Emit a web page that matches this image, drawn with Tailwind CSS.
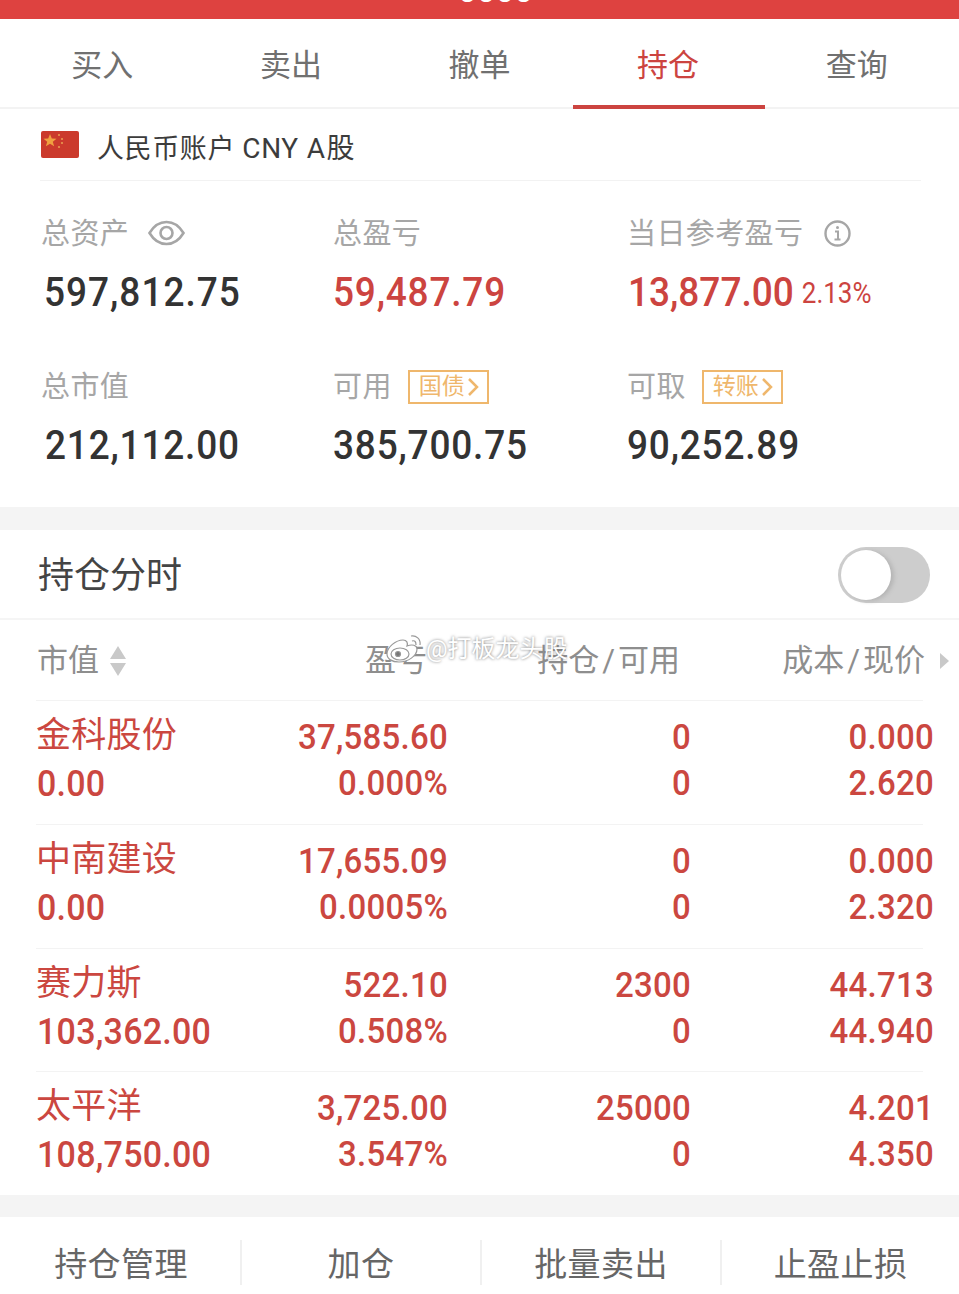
<!DOCTYPE html>
<html lang="en">
  <head>
    <meta charset="UTF-8" />
    <script src="https://cdn.jsdelivr.net/npm/@tailwindcss/browser@4"></script>
    <meta name="viewport" content="width=device-width, initial-scale=1.0" />
    <title>持仓</title>
  </head>

  <body class="bg-white font-['Roboto','Noto_Sans_CJK_SC',sans-serif]">
    <div class="relative w-[959px] h-[1294px] overflow-hidden bg-white">
      <!-- Top Bar -->
      <div class="h-[19px] bg-[#de4240] overflow-hidden flex justify-center">
        <span class="ml-[32px] text-white text-[33px] leading-[33px] -mt-[26px] font-medium">0000</span>
      </div>

      <!-- Tabs -->
      <nav class="flex h-[90px] px-2 border-b-2 border-[#f3f3f3] text-[31px] text-[#707070]">
        <a class="flex-1 flex items-center justify-center pt-[6px]">买入</a>
        <a class="flex-1 flex items-center justify-center pt-[6px]">卖出</a>
        <a class="flex-1 flex items-center justify-center pt-[6px]">撤单</a>
        <a class="relative flex-1 flex items-center justify-center pt-[6px] text-[#cc4440]">
          持仓
          <span class="absolute left-[-1px] right-[-3px] bottom-[-2px] h-[4px] bg-[#cc4440]"></span>
        </a>
        <a class="flex-1 flex items-center justify-center pt-[6px]">查询</a>
      </nav>

      <!-- Account -->
      <div class="ml-10 mr-[38px] h-[72px] border-b border-[#f2f2f2] flex items-center gap-[18px] text-[27px] text-[#3c3c3c]">
        <svg class="w-[38px] h-[27px] ml-px" viewBox="0 0 38 27">
          <rect width="38" height="27" rx="2" fill="#cb3a2c" />
          <polygon points="9,3 10.800,7.600 15.500,7.800 11.800,10.800 13.100,15.300 9,12.700 4.900,15.300 6.200,10.800 2.500,7.800 7.200,7.600" fill="#f0a040" />
          <circle cx="18" cy="4" r="1.100" fill="#e89a50" />
          <circle cx="21" cy="8" r="1.100" fill="#e89a50" />
          <circle cx="21" cy="12" r="1.100" fill="#e89a50" />
          <circle cx="18" cy="16" r="1.100" fill="#e89a50" />
        </svg>
        <span class="pt-[9px] tracking-[0.6px]">人民币账户 <span class="text-[28px]">CNY</span><span class="ml-[8px] text-[28px] tracking-[1.5px]">A股</span></span>
      </div>

      <!-- Assets -->
      <div class="grid grid-cols-[292px_294px_1fr] pl-[41px] h-[326px] pt-[32px] content-start">
        <div class="h-[153px]">
          <div class="flex items-center gap-[19px] h-[40px] text-[29px] tracking-[0.4px] text-[#a6a6a6]">
            <span class="pt-[4px]">总资产</span>
            <svg class="w-[37px] h-[26px]" viewBox="0 0 37 26" fill="none" stroke="#a6a6a6" stroke-width="2.600">
              <path d="M1.500 13C6 5.500 12 2 18.500 2S31 5.500 35.500 13C31 20.500 25 24 18.500 24S6 20.500 1.500 13Z" />
              <circle cx="18.500" cy="13" r="6" />
            </svg>
          </div>
          <div class="mt-[18px] ml-[3px] text-[37px] leading-[44px] font-medium tracking-[1px] scale-y-[1.1] text-[#333]">597,812.75</div>
        </div>
        <div class="h-[153px]">
          <div class="h-[40px] text-[29px] tracking-[0.4px] text-[#a6a6a6] flex items-center"><span class="pt-[4px]">总盈亏</span></div>
          <div class="mt-[18px] text-[37px] leading-[44px] font-medium tracking-[0.8px] scale-y-[1.1] text-[#cc4440]">59,487.79</div>
        </div>
        <div class="h-[153px]">
          <div class="h-[40px] text-[29px] tracking-[0.4px] text-[#a6a6a6] flex items-center gap-[21px]">
            <span class="pt-[4px]">当日参考盈亏</span>
            <svg class="w-[27px] h-[27px]" viewBox="0 0 27 27" fill="none" stroke="#a6a6a6">
              <circle cx="13.500" cy="13.500" r="12" stroke-width="2.400" />
              <path d="M11 11.500h3v8M10.500 19.500h6" stroke-width="2" />
              <circle cx="13.500" cy="7.500" r="1.500" fill="#a6a6a6" stroke="none" />
            </svg>
          </div>
          <div class="mt-[18px] flex items-center gap-[8px] text-[#cc4440]">
            <span class="ml-px text-[37px] leading-[44px] font-medium scale-y-[1.1]">13,877.00</span>
            <span class="text-[26px] scale-y-[1.1]">2.13%</span>
          </div>
        </div>
        <div>
          <div class="h-[40px] text-[29px] tracking-[0.4px] text-[#a6a6a6] flex items-center"><span class="pt-[4px]">总市值</span></div>
          <div class="mt-[18px] ml-[4px] text-[37px] leading-[44px] font-medium tracking-[0.8px] scale-y-[1.1] text-[#333]">212,112.00</div>
        </div>
        <div>
          <div class="h-[40px] text-[29px] tracking-[0.4px] text-[#a6a6a6] flex items-center gap-[16px]">
            <span class="pt-[4px]">可用</span>
            <span class="flex items-center gap-[2px] pl-[9px] w-[81px] h-[34px] mt-px border-2 border-[#efb76c] text-[23px] tracking-normal text-[#efb76c]">
              <span class="pt-[2px]">国债</span>
              <svg class="w-[12px] h-[20px]" viewBox="0 0 12 20" fill="none" stroke="#efb76c" stroke-width="2.500"><path d="M2 2l8 8-8 8" /></svg>
            </span>
          </div>
          <div class="mt-[18px] text-[37px] leading-[44px] font-medium tracking-[0.8px] scale-y-[1.1] text-[#333]">385,700.75</div>
        </div>
        <div>
          <div class="h-[40px] text-[29px] tracking-[0.4px] text-[#a6a6a6] flex items-center gap-[16px]">
            <span class="pt-[4px]">可取</span>
            <span class="flex items-center gap-[2px] pl-[9px] w-[81px] h-[34px] mt-px border-2 border-[#efb76c] text-[23px] tracking-normal text-[#efb76c]">
              <span class="pt-[2px]">转账</span>
              <svg class="w-[12px] h-[20px]" viewBox="0 0 12 20" fill="none" stroke="#efb76c" stroke-width="2.500"><path d="M2 2l8 8-8 8" /></svg>
            </span>
          </div>
          <div class="mt-[18px] text-[37px] leading-[44px] font-medium tracking-[0.8px] scale-y-[1.1] text-[#333]">90,252.89</div>
        </div>
      </div>

      <div class="h-[23px] bg-[#f4f4f4]"></div>

      <!-- Chart toggle -->
      <div class="h-[90px] border-b-2 border-[#f5f5f5] flex items-center justify-between pl-[38px] pr-[29px] text-[36px] text-[#444]">
        <span class="pt-[4px]">持仓分时</span>
        <div class="w-[92px] h-[56px] mt-px rounded-full bg-[#cdcdcd] p-[3px]">
          <div class="w-[50px] h-[50px] rounded-full bg-white shadow-[3px_1px_4px_#b4b4b4]"></div>
        </div>
      </div>

      <!-- Table Header -->
      <div class="relative h-[80px] grid grid-cols-[165px_225px_253px_1fr] items-center pt-[2px] pl-[37px] pr-[10px] text-[31px] text-[#8e8e8e]">
        <div class="flex items-center gap-[11px]">
          <span>市值</span>
          <svg class="w-[16px] h-[30px]" viewBox="0 0 16 30" fill="#c9c9c9"><path d="M8 0l8 13H0zM8 30L0 17h16z" /></svg>
        </div>
        <div class="text-right">盈亏</div>
        <div class="text-right">持仓<span class="mx-[3px]">/</span>可用</div>
        <div class="flex items-center justify-end gap-[15px]">
          <span>成本<span class="mx-[3px]">/</span>现价</span>
          <svg class="w-[9px] h-[16px]" viewBox="0 0 9 16" fill="#c9c9c9"><path d="M0 0l9 8-9 8z" /></svg>
        </div>

        <!-- Watermark -->
        <div class="absolute left-[384px] top-[11px] flex items-center">
          <svg class="w-[42px] h-[34px]" viewBox="0 0 42 34" fill="#fff" stroke="#999" stroke-width="1.200">
            <path d="M3 22c0-7 9-14 16-14 4 0 5 3 4 6 5-2 10-1 10 3 0 7-9 13-18 13C8 30 3 27 3 22Z" />
            <ellipse cx="16" cy="22" rx="9" ry="6" />
            <circle cx="14" cy="22" r="2.500" fill="#777" />
            <path d="M27 4c5-1 10 3 9 9M28 9c3-1 4 1 4 4" fill="none" />
          </svg>
          <span class="text-[24px] text-white [text-shadow:0_0_3px_#777]">@打板龙头股</span>
        </div>
      </div>

      <!-- Rows -->
      <div class="mx-[36px] border-t border-[#f3f3f3]">
        <div class="h-[124px] border-b border-[#f3f3f3] pt-[12px]">
          <div class="w-[898px] grid grid-cols-[191px_221px_243px_243px] text-[33px] text-[#cb4740] font-medium leading-[42px] text-right tracking-[0.25px]">
            <div class="text-left"><div class="text-[35px] leading-[45px] font-normal">金科股份</div><div class="mt-[4px] ml-px text-[34px] scale-y-[1.08] origin-left">0.00</div></div>
            <div class="pt-[5px] scale-y-[1.08]"><div>37,585.60</div><div>0.000%</div></div>
            <div class="pt-[5px] scale-y-[1.08]"><div>0</div><div>0</div></div>
            <div class="pt-[5px] scale-y-[1.08]"><div>0.000</div><div>2.620</div></div>
          </div>
        </div>
        <div class="h-[124px] border-b border-[#f3f3f3] pt-[12px]">
          <div class="w-[898px] grid grid-cols-[191px_221px_243px_243px] text-[33px] text-[#cb4740] font-medium leading-[42px] text-right tracking-[0.25px]">
            <div class="text-left"><div class="text-[35px] leading-[45px] font-normal">中南建设</div><div class="mt-[4px] ml-px text-[34px] scale-y-[1.08] origin-left">0.00</div></div>
            <div class="pt-[5px] scale-y-[1.08]"><div>17,655.09</div><div>0.0005%</div></div>
            <div class="pt-[5px] scale-y-[1.08]"><div>0</div><div>0</div></div>
            <div class="pt-[5px] scale-y-[1.08]"><div>0.000</div><div>2.320</div></div>
          </div>
        </div>
        <div class="h-[123px] border-b border-[#f3f3f3] pt-[12px]">
          <div class="w-[898px] grid grid-cols-[191px_221px_243px_243px] text-[33px] text-[#cb4740] font-medium leading-[42px] text-right tracking-[0.25px]">
            <div class="text-left"><div class="text-[35px] leading-[45px] font-normal">赛力斯</div><div class="mt-[4px] ml-px text-[34px] scale-y-[1.08] origin-left">103,362.00</div></div>
            <div class="pt-[5px] scale-y-[1.08]"><div>522.10</div><div>0.508%</div></div>
            <div class="pt-[5px] scale-y-[1.08]"><div>2300</div><div>0</div></div>
            <div class="pt-[5px] scale-y-[1.08]"><div>44.713</div><div>44.940</div></div>
          </div>
        </div>
        <div class="h-[123px] pt-[12px]">
          <div class="w-[898px] grid grid-cols-[191px_221px_243px_243px] text-[33px] text-[#cb4740] font-medium leading-[42px] text-right tracking-[0.25px]">
            <div class="text-left"><div class="text-[35px] leading-[45px] font-normal">太平洋</div><div class="mt-[4px] ml-px text-[34px] scale-y-[1.08] origin-left">108,750.00</div></div>
            <div class="pt-[5px] scale-y-[1.08]"><div>3,725.00</div><div>3.547%</div></div>
            <div class="pt-[5px] scale-y-[1.08]"><div>25000</div><div>0</div></div>
            <div class="pt-[5px] scale-y-[1.08]"><div>4.201</div><div>4.350</div></div>
          </div>
        </div>
      </div>

      <div class="h-[22px] bg-[#f4f4f4]"></div>

      <!-- Bottom Actions -->
      <div class="grid grid-cols-[240px_240px_240px_1fr] h-[77px] pt-[23px] pl-[2px] text-[33px] tracking-[0.4px] text-[#666]">
        <div class="h-[45px] flex items-center justify-center pt-[4px] border-r-2 border-[#f0f0f0]">持仓管理</div>
        <div class="h-[45px] flex items-center justify-center pt-[4px] border-r-2 border-[#f0f0f0]">加仓</div>
        <div class="h-[45px] flex items-center justify-center pt-[4px] border-r-2 border-[#f0f0f0]">批量卖出</div>
        <div class="h-[45px] flex items-center justify-center pt-[4px]">止盈止损</div>
      </div>
    </div>
  </body>
</html>
